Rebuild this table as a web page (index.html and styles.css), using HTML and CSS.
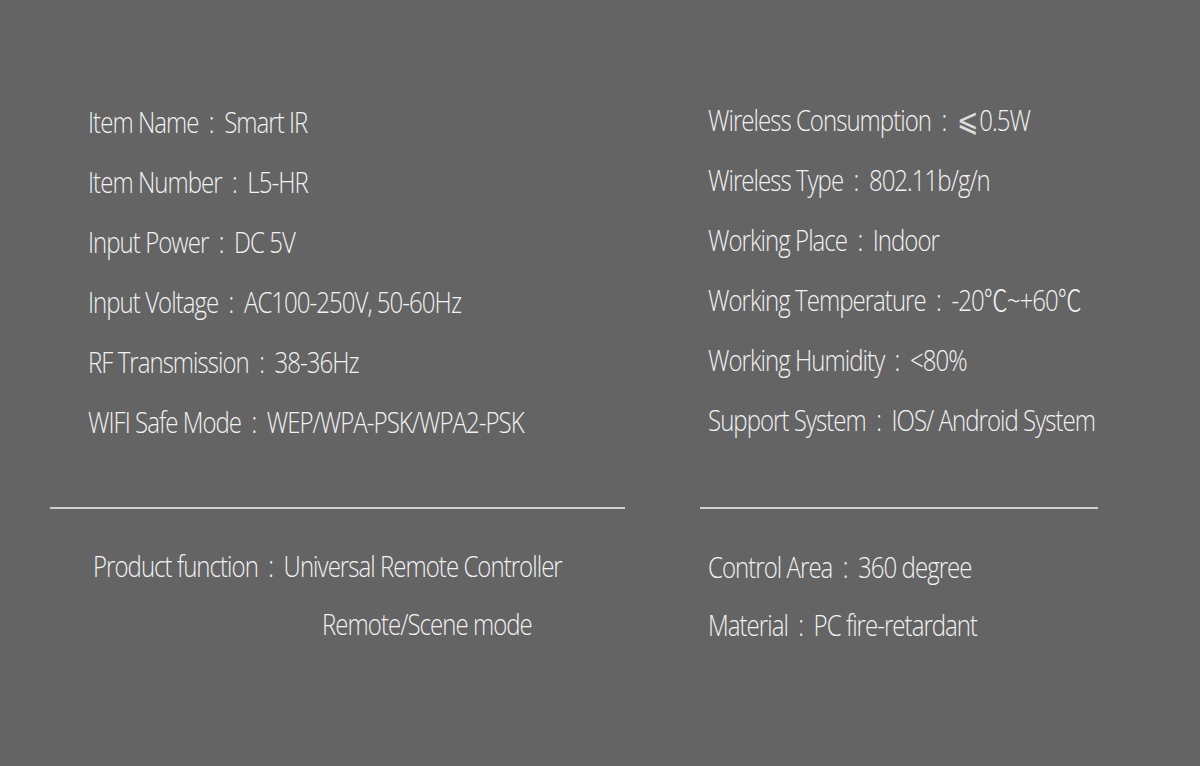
FILE: index.html
```html
<!DOCTYPE html>
<html lang="en">
<head>
<meta charset="utf-8">
<title>Smart IR specifications</title>
<link rel="stylesheet" href="styles.css">
</head>
<body>
<main class="sheet">
  <section class="col col-left">
    <ul class="specs specs-top">
      <li class="spec">Item Name<span class="sep">:</span>Smart IR</li>
      <li class="spec">Item Number<span class="sep">:</span>L5-HR</li>
      <li class="spec">Input Power<span class="sep">:</span>DC 5V</li>
      <li class="spec">Input Voltage<span class="sep">:</span>AC100-250V, 50-60Hz</li>
      <li class="spec">RF Transmission<span class="sep">:</span>38-36Hz</li>
      <li class="spec">WIFI Safe Mode<span class="sep">:</span>WEP/WPA-PSK/WPA2-PSK</li>
    </ul>
    <hr class="rule">
    <ul class="specs specs-bottom">
      <li class="spec spec-b1">Product function<span class="sep">:</span>Universal Remote Controller</li>
      <li class="spec spec-cont">Remote/Scene mode</li>
    </ul>
  </section>
  <section class="col col-right">
    <ul class="specs specs-top">
      <li class="spec">Wireless Consumption<span class="sep">:</span><span class="le">⩽</span>0.5W</li>
      <li class="spec">Wireless Type<span class="sep">:</span>802.11b/g/n</li>
      <li class="spec">Working Place<span class="sep">:</span>Indoor</li>
      <li class="spec">Working Temperature<span class="sep">:</span>-20℃~+60℃</li>
      <li class="spec">Working Humidity<span class="sep">:</span>&lt;80%</li>
      <li class="spec">Support System<span class="sep">:</span>IOS/ Android System</li>
    </ul>
    <hr class="rule">
    <ul class="specs specs-bottom">
      <li class="spec">Control Area<span class="sep">:</span>360 degree</li>
      <li class="spec">Material<span class="sep">:</span>PC fire-retardant</li>
    </ul>
  </section>
</main>
</body>
</html>
```
FILE: styles.css
```css
html, body {
  margin: 0;
  padding: 0;
}
body {
  background: #646464;
  width: 1200px;
  height: 766px;
  overflow: hidden;
  font-family: "Open Sans", "Noto Sans CJK TC", sans-serif;
  font-weight: 300;
  color: #f2f2f2;
}
.sheet {
  display: flex;
  padding-top: 92px;
  padding-left: 50px;
}
.col {
  display: flex;
  flex-direction: column;
}
.col-left {
  width: 575px;
}
.col-right {
  width: 398px;
  margin-left: 75px;
}
.specs {
  list-style: none;
  margin: 0;
  padding: 0;
}
.col-left .specs {
  padding-left: 38px;
}
.col-right .specs {
  padding-left: 8px;
}
.col-right .specs-top {
  margin-top: -2px;
}
.spec {
  height: 60px;
  line-height: 60px;
  font-size: 30px;
  letter-spacing: -1.2px;
  white-space: nowrap;
  transform: scaleX(0.8);
  transform-origin: 0 50%;
}
.sep {
  display: inline-block;
  margin: 0 12px 0 13px;
  letter-spacing: 0;
}
.le {
  display: inline-block;
  font-family: "DejaVu Sans", "Noto Sans CJK TC", sans-serif;
  font-size: 32px;
  line-height: 1;
  letter-spacing: 0;
  margin-right: 1px;
  color: #dcdcdc;
}
.rule {
  margin: 55px 0 0 0;
  border: 0;
  height: 2px;
  background: #cfcfcf;
}
.col-right .rule {
  margin-top: 57px;
}
.specs-bottom {
  margin-top: 28px;
}
.col-right .specs-bottom {
  margin-top: 29px;
}
.specs-bottom .spec {
  height: 58px;
  line-height: 58px;
}
.col-left .spec-b1 {
  margin-left: 5px;
}
.col-left .spec-cont {
  margin-left: 234px;
}
```
